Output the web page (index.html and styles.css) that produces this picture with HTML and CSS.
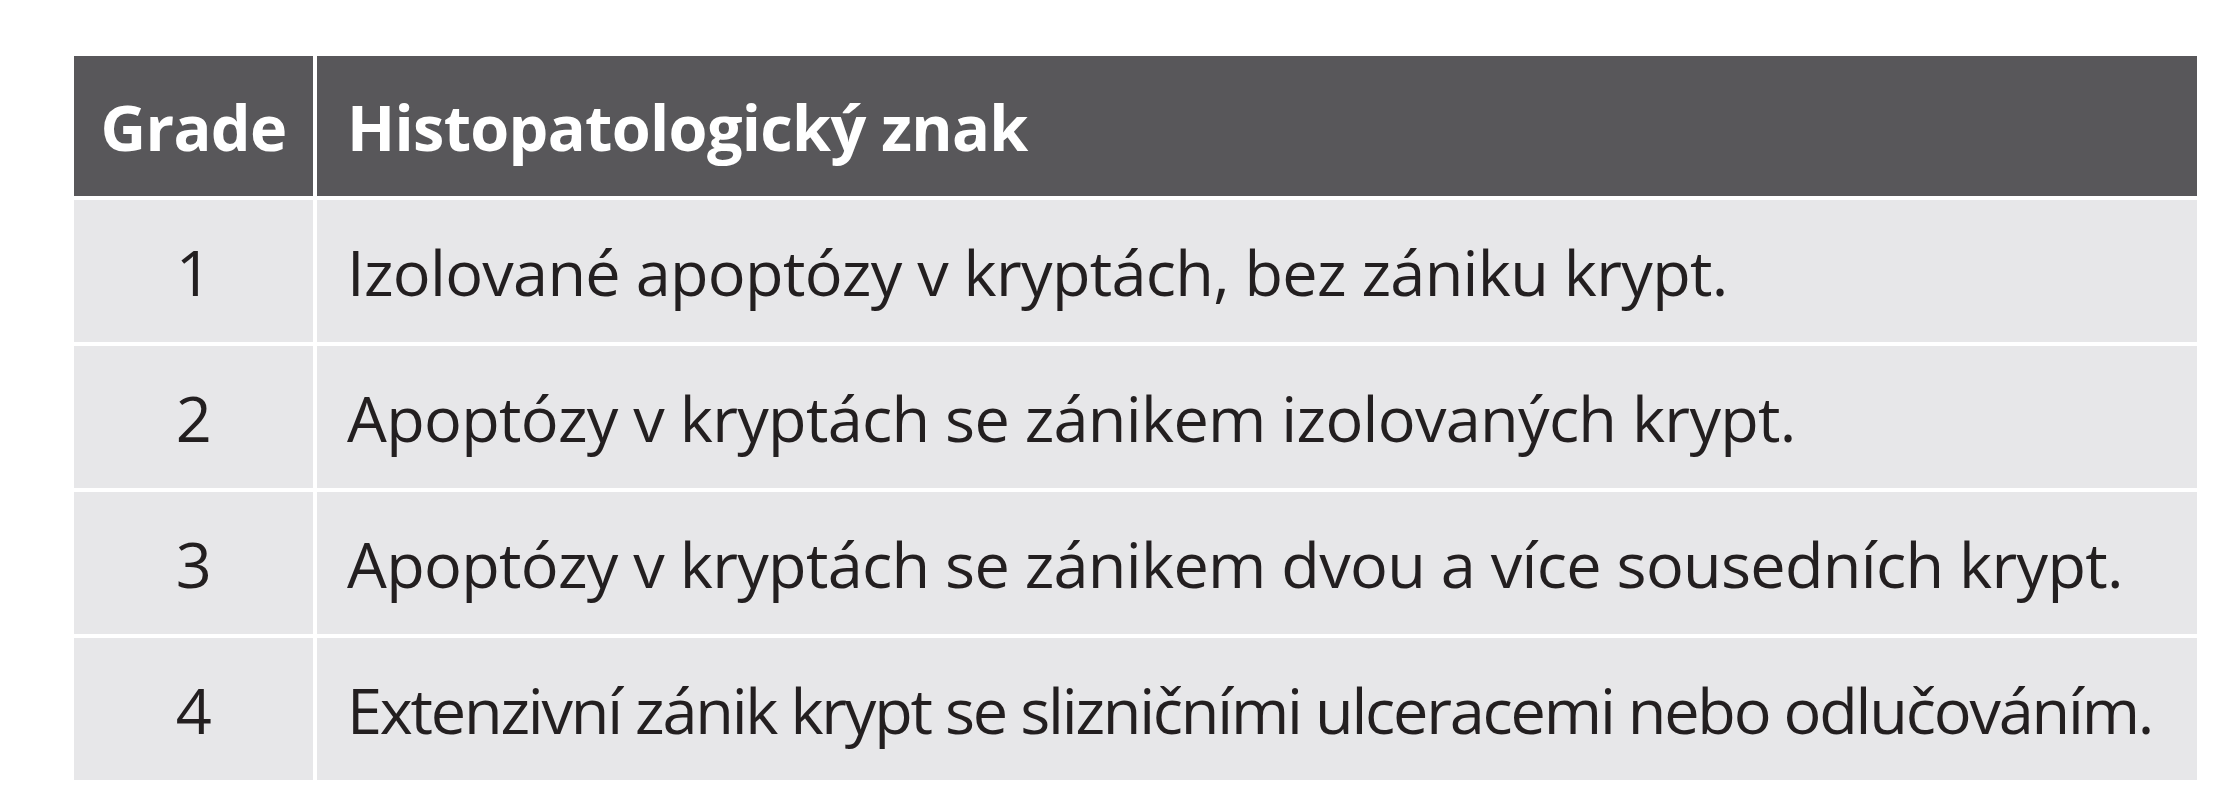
FILE: index.html
```html
<!DOCTYPE html>
<html lang="cs">
<head>
<meta charset="utf-8">
<title>Grade – Histopatologický znak</title>
<link rel="stylesheet" href="styles.css">
</head>
<body>
<div class="page">
  <div class="grade-table">
    <div class="cell head num">Grade</div>
    <div class="cell head desc">Histopatologický znak</div>
    <div class="cell num">1</div>
    <div class="cell desc">Izolované apoptózy v kryptách, bez zániku krypt.</div>
    <div class="cell num">2</div>
    <div class="cell desc">Apoptózy v kryptách se zánikem izolovaných krypt.</div>
    <div class="cell num">3</div>
    <div class="cell desc">Apoptózy v kryptách se zánikem dvou a více sousedních krypt.</div>
    <div class="cell num">4</div>
    <div class="cell desc tight">Extenzivní zánik krypt se slizničními ulceracemi nebo odlučováním.</div>
  </div>
</div>
</body>
</html>
```

FILE: styles.css
```css
html, body {
  margin: 0;
  padding: 0;
  background: #ffffff;
}

.page {
  padding: 56px 0 0 74px;
}

.grade-table {
  display: grid;
  width: 2123px;
  grid-template-columns: 239px 1880px;
  grid-template-rows: 140px repeat(4, 142px);
  gap: 4px;
  background: #ffffff;
  font-family: "Open Sans", "Noto Sans", sans-serif;
  font-size: 63px;
  letter-spacing: -0.7px;
  line-height: 1;
  color: #231f20;
}

.cell {
  display: flex;
  align-items: center;
  background: #e7e7e9;
  white-space: nowrap;
}

.cell.num {
  justify-content: center;
}

.cell.desc {
  padding-left: 30px;
}

.cell.tight {
  letter-spacing: -2.2px;
}

.cell.head {
  background: #58575a;
  color: #ffffff;
  font-weight: 700;
}
```
